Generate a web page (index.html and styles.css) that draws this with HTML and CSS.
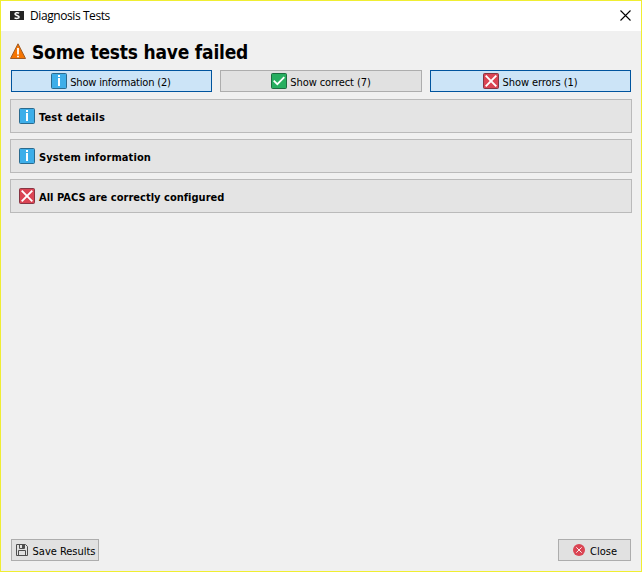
FILE: index.html
```html
<!DOCTYPE html>
<html lang="en">
<head>
<meta charset="utf-8">
<title>Diagnosis Tests</title>
<link rel="stylesheet" href="styles.css">
</head>
<body>
<svg width="0" height="0" class="defs">
  <symbol id="info" viewBox="0 0 16 16"><rect x=".5" y=".5" width="15" height="15" rx="1" fill="#3daee9" stroke="#2a6a8e"/><path d="M7 2h2v2H7zM7 5h2v8H7z" fill="#fff"/></symbol>
  <symbol id="ok" viewBox="0 0 16 16"><rect x=".5" y=".5" width="15" height="15" rx="1" fill="#27ae60" stroke="#1d6b40"/><path d="M2.7 7.6l3.6 3.6 7-7" fill="none" stroke="#fff" stroke-width="1.8"/></symbol>
  <symbol id="error" viewBox="0 0 16 16"><rect x=".5" y=".5" width="15" height="15" rx="1" fill="#da4453" stroke="#863442"/><path d="M2.7 2.7l10.6 10.6M13.3 2.7L2.7 13.3" fill="none" stroke="#fff" stroke-width="1.9"/></symbol>
</svg>
<div class="window">
  <header class="titlebar">
    <svg class="logo" width="14" height="10" viewBox="0 0 14 10"><path d="M0 0h14v9H0z" fill="#242424"/><path d="M9.2 2.1C7.5 1.4 5 1.6 5 3s4.1 1.5 4.1 3S6.3 7.8 4.5 6.9" fill="none" stroke="#fff" stroke-width="1.5"/></svg>
    <span class="caption">Diagnosis Tests</span>
    <svg class="dismiss" width="11" height="11" viewBox="0 0 11 11"><path d="M.5 .5l10 10M10.5 .5l-10 10" stroke="#000" stroke-width="1.1"/></svg>
  </header>
  <main class="content">
    <div class="heading">
      <svg width="16" height="17" viewBox="0 0 16 17"><path d="M8 .8L15.5 15.5H.5z" fill="#f67400" stroke="#9c5a25" stroke-linejoin="round"/><path d="M7.1 5h1.8v6.5H7.1zM7.1 12.7h1.8v1.6H7.1z" fill="#fff"/></svg>
      <h1>Some tests have failed</h1>
    </div>
    <div class="filters">
      <button class="button checked"><svg class="icon"><use href="#info"/></svg><span class="t-info">Show information (2)</span></button>
      <button class="button"><svg class="icon"><use href="#ok"/></svg><span class="t-ok">Show correct (7)</span></button>
      <button class="button checked"><svg class="icon"><use href="#error"/></svg><span class="t-err">Show errors (1)</span></button>
    </div>
    <div class="results">
      <section class="result"><svg class="icon"><use href="#info"/></svg><span class="r-details">Test details</span></section>
      <section class="result"><svg class="icon"><use href="#info"/></svg><span class="r-system">System information</span></section>
      <section class="result"><svg class="icon"><use href="#error"/></svg><span class="r-pacs">All PACS are correctly configured</span></section>
    </div>
    <footer class="actions">
      <button class="button save"><svg width="12" height="12" viewBox="0 0 12 12"><path d="M.5 .5h9l2 2v9H.5zM3.5 .5v4h5v-4M2.5 11.5v-5h7v5" fill="none" stroke="#4d4d4d"/><path d="M6 1h2v3H6z" fill="#4d4d4d"/></svg><span>Save Results</span></button>
      <button class="button close"><svg width="12" height="12" viewBox="0 0 12 12"><circle cx="6" cy="6" r="6" fill="#da4453"/><path d="M3.3 3.3l5.4 5.4M8.7 3.3L3.3 8.7" stroke="#fff" stroke-width=".9"/></svg><span>Close</span></button>
    </footer>
  </main>
</div>
</body>
</html>
```
FILE: styles.css
```css
* { box-sizing: border-box; }
body { margin: 0; font: 11px/14px "DejaVu Sans Condensed", "DejaVu Sans", sans-serif; font-stretch: condensed; color: #000; }
.defs { position: absolute; }
svg { flex: none; display: block; }
span, h1 { white-space: nowrap; }
.window { width: 642px; height: 572px; display: flex; flex-direction: column; border: 1px solid #f0ee32; background: #f0f0f0; }
.titlebar { height: 30px; flex: none; display: flex; align-items: center; padding: 0 10px 0 9px; background: #fff; }
.caption { margin-left: 6px; font: 12px/16px "Open Sans", sans-serif; letter-spacing: -0.42px; }
.dismiss { margin-left: auto; margin-top: -2px; }
.content { flex: 1; display: flex; flex-direction: column; padding: 8px 9px 10px; }
.heading { height: 26px; display: flex; align-items: center; gap: 6px; }
.heading svg { margin-top: -1px; }
h1 { margin: 0; font: bold 19px/26px "DejaVu Sans", sans-serif; font-stretch: condensed; letter-spacing: -0.2px; }
.filters { display: grid; grid-template-columns: 201px 202px 201px; gap: 8px; margin: 5px 1px 7px; }
.button { height: 22px; display: flex; align-items: center; justify-content: center; gap: 3px; padding: 0; border: 1px solid #adadad; background: #e1e1e1; color: #000; font: inherit; }
.button.checked { border-color: #00549e; background: #cce4f7; }
.icon { width: 16px; height: 16px; }
.button span { padding-top: 3px; }
.t-info { letter-spacing: -0.18px; margin-right: 1px; }
.t-ok, .t-err { letter-spacing: -0.07px; }
.results { display: flex; flex-direction: column; gap: 6px; }
.result { height: 34px; display: flex; align-items: center; gap: 4px; padding: 0 8px; border: 1px solid #bababa; background: #e4e4e4; font-weight: bold; }
.result span { padding-top: 3px; }
.r-details { letter-spacing: 0.17px; }
.r-system { letter-spacing: 0.11px; }
.r-pacs { letter-spacing: 0.02px; }
.actions { display: flex; justify-content: space-between; margin: auto 1px 0; }
.save { width: 88px; gap: 5px; }
.save svg { margin-left: 1px; }
.save span { letter-spacing: -0.03px; }
.close { width: 73px; gap: 5px; }
.close span { margin-right: -1px; }
```
